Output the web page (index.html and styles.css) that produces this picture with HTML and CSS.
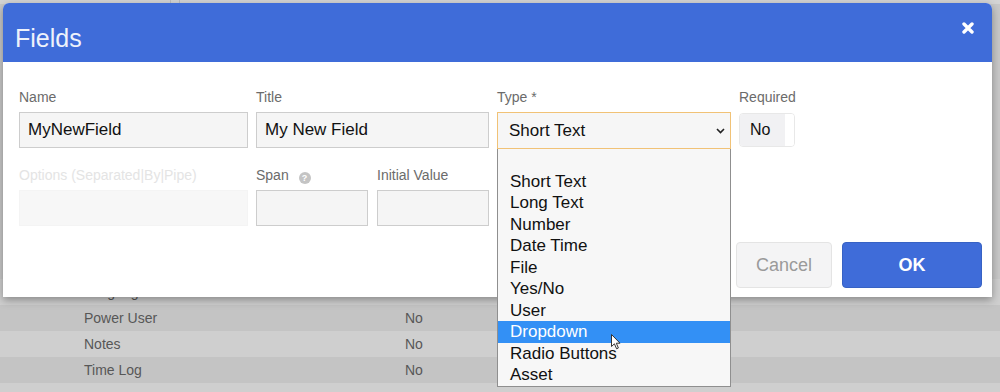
FILE: index.html
```html
<!DOCTYPE html>
<html>
<head>
<meta charset="utf-8">
<link rel="stylesheet" href="styles.css">
</head>
<body>
<div class="page">
  <div class="topbar"><span class="sep"></span><span class="sep"></span></div>
  <div class="table">
    <div class="row light"><span class="c-name">Language Code</span><span class="c-val">No</span></div>
    <div class="row dark"><span class="c-name">Power User</span><span class="c-val">No</span></div>
    <div class="row light"><span class="c-name">Notes</span><span class="c-val">No</span></div>
    <div class="row dark"><span class="c-name">Time Log</span><span class="c-val">No</span></div>
    <div class="row light"></div>
  </div>
</div>

<div class="modal">
  <div class="modal-header">
    <h1 class="modal-title">Fields</h1>
    <svg class="close" width="12" height="12" viewBox="0 0 12 12"><path d="M2 2 L10 10 M10 2 L2 10" stroke="#fff" stroke-width="3.4" stroke-linecap="round"/></svg>
  </div>
  <div class="modal-body">
    <div class="form-row">
      <div class="field w-name">
        <label class="lbl">Name</label>
        <div class="input">MyNewField</div>
      </div>
      <div class="field w-title">
        <label class="lbl">Title</label>
        <div class="input">My New Field</div>
      </div>
      <div class="field w-type">
        <label class="lbl">Type *</label>
        <div class="select">
          <span>Short Text</span>
          <svg class="chev" width="9" height="6" viewBox="0 0 9 6"><path d="M1 1 L4.5 4.5 L8 1" fill="none" stroke="#222" stroke-width="1.6"/></svg>
        </div>
      </div>
      <div class="field w-req">
        <label class="lbl">Required</label>
        <div class="toggle"><span class="tog-no">No</span><span class="tog-rest"></span></div>
      </div>
    </div>
    <div class="form-row row2">
      <div class="field w-name">
        <label class="lbl disabled">Options (Separated|By|Pipe)</label>
        <div class="input input-disabled"></div>
      </div>
      <div class="field w-span">
        <label class="lbl">Span <span class="help">?</span></label>
        <div class="input"></div>
      </div>
      <div class="field w-span">
        <label class="lbl">Initial Value</label>
        <div class="input"></div>
      </div>
    </div>
    <div class="actions">
      <button class="btn btn-cancel">Cancel</button>
      <button class="btn btn-ok">OK</button>
    </div>
  </div>
</div>

<ul class="dropdown">
  <li class="opt">&nbsp;</li>
  <li class="opt">Short Text</li>
  <li class="opt">Long Text</li>
  <li class="opt">Number</li>
  <li class="opt">Date Time</li>
  <li class="opt">File</li>
  <li class="opt">Yes/No</li>
  <li class="opt">User</li>
  <li class="opt selected">Dropdown</li>
  <li class="opt">Radio Buttons</li>
  <li class="opt">Asset</li>
</ul>

<svg class="cursor" width="10" height="16" viewBox="0 0 10 16"><path d="M0.5 0.5 L0.5 12.5 L3.4 9.8 L5.6 14.8 L7.4 14 L5.3 9.2 L9 9.2 Z" fill="#fff" stroke="#333" stroke-width="1"/></svg>
</body>
</html>
```
FILE: styles.css
```css
* { box-sizing: border-box; }
html, body { margin: 0; padding: 0; }
body {
  width: 1000px;
  height: 392px;
  overflow: hidden;
  background: #c8c8c8;
  font-family: "Liberation Sans", Arial, sans-serif;
  position: relative;
}
.page { width: 1000px; }
.topbar {
  height: 4px;
  background: #d4d4d4;
  display: flex;
  gap: 8px;
  padding-left: 170px;
}
.sep { width: 1px; height: 4px; background: #bdbdbd; }
.table { padding-top: 275px; }
.row {
  height: 26px;
  display: flex;
  align-items: center;
  font-size: 14px;
  color: #575757;
}
.row.light { background: #cfcfcf; }
.row.dark { background: #c4c4c4; }
.c-name { width: 405px; padding-left: 84px; }
.c-val { padding-left: 0; }

.modal {
  position: absolute;
  left: 3px;
  top: 3px;
  width: 989px;
  background: #fff;
  border-radius: 6px 6px 0 0;
  box-shadow: 0 3px 8px rgba(0,0,0,0.35);
}
.modal-header {
  height: 59px;
  background: #3f6cd9;
  border-radius: 6px 6px 0 0;
  display: flex;
  align-items: flex-start;
  justify-content: space-between;
  padding: 21px 18px 0 12px;
}
.modal-title {
  margin: 0;
  font-size: 25px;
  line-height: 29px;
  font-weight: normal;
  color: #eef2fb;
}
.close { margin-top: -2px; }

.modal-body {
  padding: 27px 10px 9px 16px;
}
.form-row { display: flex; gap: 8px; }
.row2 { margin-top: 18px; }
.row2 .w-span + .w-span { margin-left: 1px; }
.field { display: flex; flex-direction: column; }
.w-name { width: 229px; }
.w-title { width: 233px; }
.w-type { width: 234px; }
.w-req { width: 56px; }
.w-span { width: 112px; }
.lbl {
  display: block;
  font-size: 14px;
  line-height: 16px;
  height: 16px;
  color: #6b6b6b;
  margin-bottom: 7px;
  white-space: nowrap;
}
.lbl.disabled { color: #e4e4e4; }
.help {
  display: inline-block;
  width: 12px;
  height: 12px;
  border-radius: 50%;
  background: #c4c4c4;
  color: #fff;
  font-size: 9px;
  line-height: 12px;
  text-align: center;
  font-weight: bold;
  margin-left: 6px;
  vertical-align: -1px;
}
.input {
  height: 36px;
  background: #f5f5f5;
  border: 1px solid #cdcdcd;
  font-size: 17px;
  line-height: 34px;
  padding: 0 8px;
  color: #111;
}
.input-disabled { background: #f7f7f7; border-color: #f4f4f4; }
.select {
  height: 37px;
  background: #f6f6f6;
  border: 1px solid #f1c276;
  display: flex;
  align-items: center;
  justify-content: space-between;
  padding: 0 5px 0 11px;
  font-size: 17px;
  color: #111;
}
.chev { margin-right: 0; }
.toggle {
  margin-top: 1px;
  height: 34px;
  display: flex;
  border: 1px solid #e8e8e8;
  border-radius: 4px;
  overflow: hidden;
}
.tog-no {
  width: 45px;
  background: #f1f1f3;
  font-size: 16px;
  line-height: 32px;
  padding-left: 10px;
  color: #111;
}
.tog-rest { flex: 1; background: #fff; }

.actions {
  display: flex;
  justify-content: flex-end;
  gap: 10px;
  margin-top: 16px;
}
.btn {
  height: 46px;
  font-family: "Liberation Sans", Arial, sans-serif;
  font-size: 18px;
  border-radius: 4px;
  padding: 0;
}
.btn-cancel {
  width: 96px;
  background: #f4f4f5;
  border: 1px solid #e4e4e4;
  color: #9a9a9a;
}
.btn-ok {
  width: 140px;
  background: #3f6cd9;
  border: 1px solid #3762c4;
  color: #fff;
  font-weight: bold;
}

.dropdown {
  position: absolute;
  left: 497px;
  top: 149px;
  width: 234px;
  margin: 0;
  padding: 0;
  list-style: none;
  background: #f7f7f7;
  border: 1px solid #8f8f8f;
  border-top: none;
}
.opt {
  height: 21.5px;
  line-height: 21.5px;
  font-size: 17px;
  padding-left: 12px;
  color: #111;
}
.opt.selected { background: #3390f5; color: #fff; }
.cursor {
  position: absolute;
  left: 611px;
  top: 334px;
}
```
